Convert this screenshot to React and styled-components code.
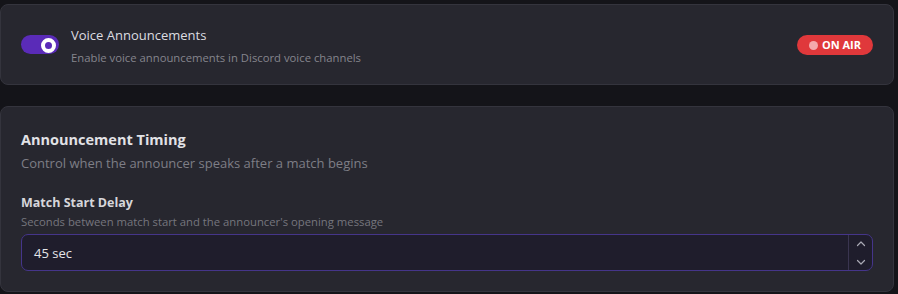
import React from "react"
import styled, { createGlobalStyle } from "styled-components"

const GlobalStyle = createGlobalStyle`
  html, body {
    margin: 0;
    background: #141419;
    font-family: "Open Sans", "Noto Sans", sans-serif;
  }
`

const Page = styled.div`
  display: flex;
  flex-direction: column;
  gap: 21px;
  padding: 4px 4px 0 0;
  width: 898px;
  height: 294px;
  box-sizing: border-box;
  overflow: hidden;
`

const Card = styled.section`
  background: #27272f;
  border: 1px solid #34343d;
  border-radius: 8px;
  box-sizing: border-box;
  padding: ${(p) => p.$padding};
  height: ${(p) => p.$height};
`

const ToggleRow = styled.div`
  display: flex;
  align-items: center;
  height: 100%;
  gap: 12px;
`

const Switch = styled.div`
  position: relative;
  width: 38px;
  height: 19px;
  border-radius: 10px;
  background: #5a2bb8;
  flex-shrink: 0;

  &::after {
    content: "";
    position: absolute;
    right: 3px;
    top: 2.5px;
    width: 7px;
    height: 7px;
    border-radius: 50%;
    border: 4px solid #ffffff;
    background: #5a2bb8;
  }
`

const ToggleText = styled.div`
  flex: 1;
  display: flex;
  flex-direction: column;
  gap: 6px;
  margin-top: 2px;

  .title {
    font-size: 13px;
    color: #dcdce0;
  }
  .desc {
    font-size: 11.3px;
    color: #85858d;
  }
`

const OnAir = styled.div`
  display: flex;
  align-items: center;
  gap: 4px;
  height: 20px;
  padding: 0 12px 0 12px;
  border-radius: 10px;
  background: #e0383b;
  color: #ffffff;
  font-size: 11px;
  font-weight: 700;

  &::before {
    content: "";
    width: 9px;
    height: 9px;
    border-radius: 50%;
    background: #f4a9ac;
    margin-top: 1px;
  }
`

const SectionTitle = styled.h2`
  margin: 0;
  font-size: 14.5px;
  font-weight: 700;
  color: #e2e2e6;
  line-height: 20px;
`

const SectionDesc = styled.p`
  margin: 4px 0 0;
  font-size: 13px;
  color: #7e7e86;
  line-height: 18px;
`

const Field = styled.div`
  margin-top: 23px;
  display: flex;
  flex-direction: column;
`

const FieldLabel = styled.label`
  font-size: 12.5px;
  font-weight: 700;
  color: #d6d6da;
  line-height: 16px;
`

const FieldHint = styled.span`
  font-size: 11.3px;
  color: #76767e;
  line-height: 15px;
  margin-top: 3px;
`

const NumberBox = styled.div`
  margin-top: 5px;
  display: flex;
  height: 37px;
  border: 1px solid #45358a;
  border-radius: 7px;
  background: #1f1d2c;
  box-sizing: border-box;
  overflow: hidden;
`

const Value = styled.div`
  flex: 1;
  display: flex;
  align-items: center;
  padding-left: 12px;
  font-size: 13px;
  color: #e4e4e8;
`

const Stepper = styled.div`
  width: 24px;
  border-left: 1px solid #3a3550;
  display: flex;
  flex-direction: column;
  align-items: center;
  justify-content: space-between;
  padding: 5px 0 4px;
  box-sizing: border-box;
`

const Chevron = ({ up }) => (
  <svg width="10" height="8" viewBox="0 0 10 8" fill="none">
    <path
      d={up ? "M1.5 5.5 L5 2 L8.5 5.5" : "M1.5 2.5 L5 6 L8.5 2.5"}
      stroke="#a9a9b4"
      strokeWidth="1.2"
      strokeLinecap="round"
      strokeLinejoin="round"
    />
  </svg>
)

export default function App() {
  return (
    <>
      <GlobalStyle />
      <Page>
        <Card $height="81px" $padding="0 20px">
          <ToggleRow>
            <Switch />
            <ToggleText>
              <span className="title">Voice Announcements</span>
              <span className="desc">Enable voice announcements in Discord voice channels</span>
            </ToggleText>
            <OnAir>ON AIR</OnAir>
          </ToggleRow>
        </Card>
        <Card $height="186px" $padding="23px 20px 0">
          <SectionTitle>Announcement Timing</SectionTitle>
          <SectionDesc>Control when the announcer speaks after a match begins</SectionDesc>
          <Field>
            <FieldLabel>Match Start Delay</FieldLabel>
            <FieldHint>Seconds between match start and the announcer's opening message</FieldHint>
            <NumberBox>
              <Value>45 sec</Value>
              <Stepper>
                <Chevron up />
                <Chevron />
              </Stepper>
            </NumberBox>
          </Field>
        </Card>
      </Page>
    </>
  )
}
